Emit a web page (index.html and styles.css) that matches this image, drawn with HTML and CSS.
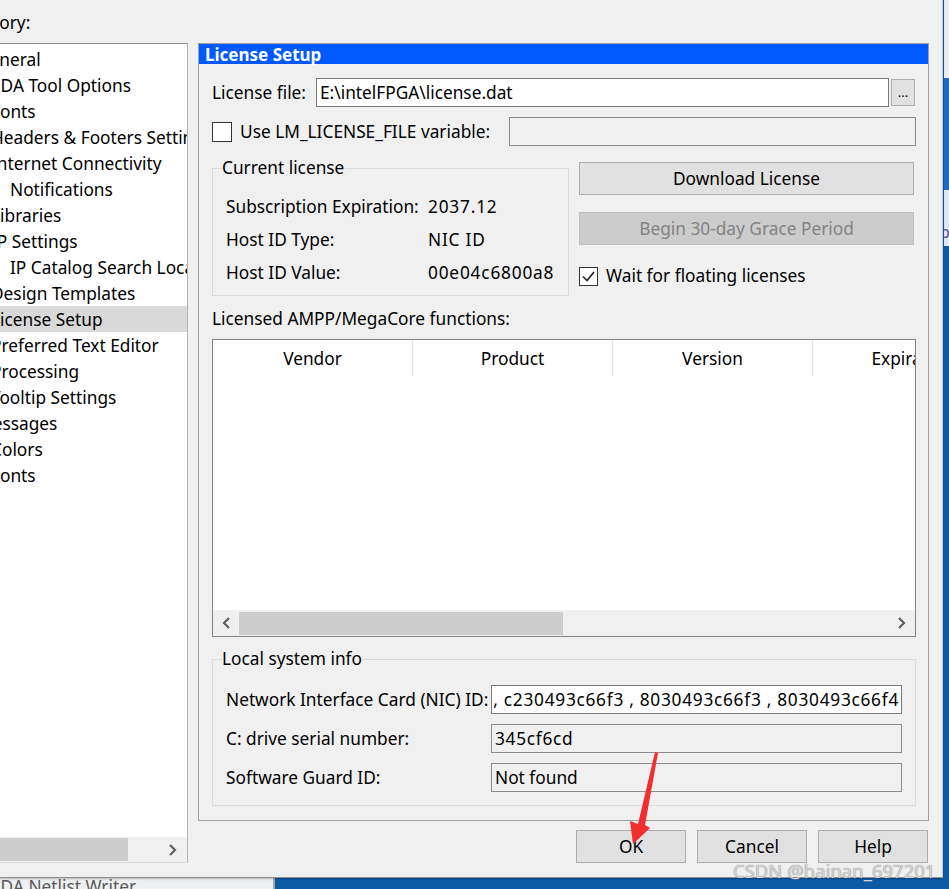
FILE: index.html
```html
<!DOCTYPE html>
<html>
<head>
<meta charset="utf-8">
<title>Options - License Setup</title>
<link rel="stylesheet" href="styles.css">
</head>
<body>
<div class="desktop">
  <div class="bg-strip strip-a"></div>
  <div class="bg-strip strip-b"></div>
  <div class="bg-strip strip-c"><span>p</span></div>
  <div class="bg-window"><span class="bg-window-text">EDA Netlist Writer</span></div>

  <div class="dialog">
    <div class="cat-label">Category:</div>
    <div class="dlg-body">
      <div class="tree">
        <ul class="tree-list">
          <li class="l0">General</li>
          <li class="l1">EDA Tool Options</li>
          <li class="l1">Fonts</li>
          <li class="l1">Headers &amp; Footers Settings</li>
          <li class="l1">Internet Connectivity</li>
          <li class="l2">Notifications</li>
          <li class="l1">Libraries</li>
          <li class="l1">IP Settings</li>
          <li class="l2">IP Catalog Search Locations</li>
          <li class="l1">Design Templates</li>
          <li class="l1 sel">License Setup</li>
          <li class="l1">Preferred Text Editor</li>
          <li class="l1">Processing</li>
          <li class="l1">Tooltip Settings</li>
          <li class="l0">Messages</li>
          <li class="l1">Colors</li>
          <li class="l1">Fonts</li>
        </ul>
        <div class="hscroll tree-scroll">
          <div class="thumb tree-thumb"></div>
          <div class="scroll-arrow right-arrow">
            <svg width="10" height="12" viewBox="0 0 10 12"><polyline points="2,1 7,6 2,11" fill="none" stroke="#606060" stroke-width="2.2"/></svg>
          </div>
        </div>
      </div>

      <div class="right-col">
        <section class="panel">
          <h1 class="panel-title">License Setup</h1>
          <div class="panel-body">
            <div class="row file-row">
              <span class="lbl file-lbl">License file:</span>
              <div class="field white">E:\intelFPGA\license.dat</div>
              <div class="btn dots">...</div>
            </div>

            <div class="row lm-row">
              <span class="checkbox"></span>
              <span class="lbl lm-lbl">Use LM_LICENSE_FILE variable:</span>
              <div class="field disabled lm-field"></div>
            </div>

            <div class="cur-row">
              <fieldset class="group cur-group">
                <legend>Current license</legend>
                <div class="kv"><span class="k">Subscription Expiration:</span><span class="v">2037.12</span></div>
                <div class="kv"><span class="k">Host ID Type:</span><span class="v">NIC ID</span></div>
                <div class="kv"><span class="k">Host ID Value:</span><span class="v">00e04c6800a8</span></div>
              </fieldset>
              <div class="side">
                <div class="btn wide">Download License</div>
                <div class="btn wide disabled-btn">Begin 30-day Grace Period</div>
                <div class="check-row">
                  <span class="checkbox checked">
                    <svg width="17" height="17" viewBox="0 0 17 17"><polyline points="3,8.5 7,12.5 14,4" fill="none" stroke="#222" stroke-width="1.6"/></svg>
                  </span>
                  <span class="lbl">Wait for floating licenses</span>
                </div>
              </div>
            </div>

            <div class="lbl ampp-lbl">Licensed AMPP/MegaCore functions:</div>

            <div class="table">
              <div class="thead">
                <div class="th">Vendor</div>
                <div class="th">Product</div>
                <div class="th">Version</div>
                <div class="th">Expiration</div>
              </div>
              <div class="tbody"></div>
              <div class="hscroll table-scroll">
                <div class="scroll-arrow left-arrow">
                  <svg width="10" height="12" viewBox="0 0 10 12"><polyline points="8,1 3,6 8,11" fill="none" stroke="#606060" stroke-width="2.2"/></svg>
                </div>
                <div class="thumb table-thumb"></div>
                <div class="scroll-spacer"></div>
                <div class="scroll-arrow right-arrow">
                  <svg width="10" height="12" viewBox="0 0 10 12"><polyline points="2,1 7,6 2,11" fill="none" stroke="#606060" stroke-width="2.2"/></svg>
                </div>
              </div>
            </div>

            <fieldset class="group sys-group">
              <legend>Local system info</legend>
              <div class="sys-row">
                <span class="k2">Network Interface Card (NIC) ID:</span>
                <div class="field white nic"><span>, c230493c66f3 , 8030493c66f3 , 8030493c66f4</span></div>
              </div>
              <div class="sys-row">
                <span class="k2">C: drive serial number:</span>
                <div class="field disabled num">345cf6cd</div>
              </div>
              <div class="sys-row">
                <span class="k2">Software Guard ID:</span>
                <div class="field disabled">Not found</div>
              </div>
            </fieldset>
          </div>
        </section>
        <div class="buttons">
          <div class="btn dlg-btn">OK</div>
          <div class="btn dlg-btn">Cancel</div>
          <div class="btn dlg-btn">Help</div>
        </div>
      </div>
    </div>
  </div>

  <svg class="red-arrow" width="60" height="110" viewBox="0 0 60 110">
    <polygon points="36,7 38,8 25,80 30,83 13,99 10,76 18,79 35,7" fill="#f22f2f"/>
  </svg>
  <div class="watermark">CSDN @hainan_697201</div>
</div>
</body>
</html>
```

FILE: styles.css
```css
html, body {
  margin: 0;
  padding: 0;
}
body {
  width: 949px;
  height: 889px;
  overflow: hidden;
  font-family: "Noto Sans", "Open Sans", sans-serif;
  font-size: 17.3px;
  color: #000;
}
.desktop {
  position: relative;
  width: 949px;
  height: 889px;
  background: #0c5aa6;
  overflow: hidden;
}

/* background windows */
.bg-strip {
  position: absolute;
  left: 944px;
  width: 5px;
}
.strip-a { top: 0; height: 78px; background: #e8eef3; }
.strip-b { top: 78px; height: 112px; background: #1d6cbd; }
.strip-c { top: 190px; height: 56px; background: #dce9f5; overflow: hidden; }
.strip-c span { display: block; color: #6a3aa0; font-size: 16px; line-height: 20px; margin-top: 32px; margin-left: -4px; }
.bg-window {
  position: absolute;
  left: 0;
  top: 878px;
  width: 273px;
  height: 11px;
  background: #eef0f2;
  border-right: 2px solid #a8a8a8;
  overflow: hidden;
}
.bg-window-text {
  display: block;
  margin-left: -9px;
  line-height: 14px;
  margin-top: 2px;
  color: #5a5a5a;
  white-space: nowrap;
}

/* dialog */
.dialog {
  position: absolute;
  left: 0;
  top: 0;
  width: 943px;
  height: 878px;
  box-sizing: border-box;
  background: #f0f0f0;
  border-right: 1px solid #c9c9c9;
  border-bottom: 1px solid #8e8e8e;
  box-shadow: 0 1px 2px rgba(0, 0, 0, 0.25);
}
.cat-label {
  height: 43px;
  box-sizing: border-box;
  padding-top: 12px;
  line-height: 22px;
  margin-left: -48px;
  white-space: nowrap;
}
.dlg-body {
  display: grid;
  grid-template-columns: 188px 731px;
  column-gap: 10px;
}

/* tree */
.tree {
  height: 820px;
  box-sizing: border-box;
  background: #fff;
  border-top: 1px solid #8a8a8a;
  border-right: 1px solid #b4b4b4;
  border-bottom: 1px solid #dcdcdc;
  display: flex;
  flex-direction: column;
  overflow: hidden;
}
.tree-list {
  list-style: none;
  margin: 0;
  padding: 2px 0 0 0;
  flex: 1;
}
.tree-list li {
  height: 26px;
  box-sizing: border-box;
  padding-top: 1px;
  line-height: 25px;
  white-space: nowrap;
}
.tree-list .l0 { text-indent: -23px; }
.tree-list .l1 { text-indent: -9px; }
.tree-list .l2 { text-indent: 10px; }
.tree-list .sel { background: #d9d9d9; }

.hscroll {
  display: flex;
  align-items: center;
  background: #f0f0f0;
}
.tree-scroll {
  height: 25px;
}
.thumb {
  background: #cdcdcd;
  height: 23px;
}
.tree-thumb {
  width: 128px;
}
.tree-scroll .right-arrow {
  margin-left: auto;
  width: 26px;
  margin-right: 1px;
}
.scroll-arrow {
  width: 26px;
  display: flex;
  align-items: center;
  justify-content: center;
}

/* right column */
.right-col {
  display: flex;
  flex-direction: column;
}
.panel {
  height: 778px;
  box-sizing: border-box;
  border: 1px solid #a0a0a0;
  display: flex;
  flex-direction: column;
}
.panel-title {
  margin: 0;
  height: 20px;
  box-sizing: border-box;
  padding-top: 1px;
  line-height: 19px;
  background: #0058ff;
  color: #fff;
  font-size: 17px;
  font-weight: bold;
  padding-left: 6px;
  white-space: nowrap;
}
.panel-body {
  padding: 14px 13px 0 13px;
  display: flex;
  flex-direction: column;
}
.row {
  display: flex;
  align-items: center;
}
.lbl {
  white-space: nowrap;
  line-height: 22px;
}
.file-row {
  height: 29px;
}
.file-lbl {
  width: 104px;
  flex: none;
}
.field {
  height: 29px;
  box-sizing: border-box;
  border: 1px solid #7a7a7a;
  padding-left: 3px;
  line-height: 27px;
  white-space: nowrap;
  overflow: hidden;
}
.field.white { background: #fff; }
.field.disabled { background: #f0f0f0; border-color: #8c8c8c; }
.file-row .field { flex: 1; }
.btn {
  box-sizing: border-box;
  background: #e1e1e1;
  border: 1px solid #adadad;
  text-align: center;
  white-space: nowrap;
}
.dots {
  width: 24px;
  height: 27px;
  margin-left: 2px;
  line-height: 24px;
  font-size: 13px;
}
.lm-row {
  margin-top: 10px;
  height: 29px;
}
.checkbox {
  display: inline-flex;
  align-items: center;
  justify-content: center;
  width: 20px;
  height: 20px;
  box-sizing: border-box;
  border: 1px solid #333;
  background: #fff;
  flex: none;
}
.lm-row .checkbox { margin-right: 8px; }
.lm-lbl { width: 269px; flex: none; }
.lm-field { flex: 1; margin-right: -1px; }

.cur-row {
  margin-top: 11px;
  display: flex;
  gap: 10px;
}
.group {
  margin: 0;
  border: 1px solid #dcdcdc;
  padding: 0 13px 0 9px;
  min-width: 0;
}
.group legend {
  padding: 0 1px 0 0;
  line-height: 22px;
  white-space: nowrap;
}
.cur-group {
  width: 357px;
  box-sizing: border-box;
  padding-top: 11px;
  padding-bottom: 6px;
  flex: none;
}
.kv {
  display: flex;
  height: 33px;
  line-height: 33px;
  padding-left: 4px;
  white-space: nowrap;
}
.k { width: 202px; flex: none; }
.v { letter-spacing: 0.8px; }
.side {
  width: 335px;
  padding-top: 5px;
  display: flex;
  flex-direction: column;
}
.wide {
  height: 33px;
  line-height: 31px;
}
.disabled-btn {
  margin-top: 17px;
  background: #cccccc;
  border-color: #bfbfbf;
  color: #838383;
}
.check-row {
  margin-top: 21px;
  display: flex;
  align-items: center;
  height: 20px;
}
.checkbox.checked {
  width: 19px;
  height: 19px;
  margin-right: 8px;
}
.ampp-lbl {
  margin-top: 12px;
}
.table {
  margin-top: 9px;
  margin-right: -1px;
  height: 298px;
  box-sizing: border-box;
  border: 1px solid #828282;
  background: #fff;
  display: flex;
  flex-direction: column;
  overflow: hidden;
}
.thead {
  display: flex;
  height: 36px;
  flex: none;
}
.th {
  width: 200px;
  flex: none;
  box-sizing: border-box;
  border-right: 1px solid #e5e5e5;
  text-align: center;
  line-height: 38px;
  white-space: nowrap;
}
.tbody { flex: 1; }
.table-scroll {
  height: 26px;
  flex: none;
}
.table-thumb {
  width: 324px;
}
.scroll-spacer { flex: 1; }
.table-scroll .right-arrow { margin-right: 0; }

.sys-group {
  margin-top: 11px;
  margin-right: -1px;
  padding-top: 15px;
  padding-bottom: 13px;
}
.sys-row {
  display: flex;
  align-items: center;
  padding-left: 4px;
  height: 29px;
}
.sys-row + .sys-row { margin-top: 10px; }
.k2 { width: 265px; flex: none; white-space: nowrap; }
.sys-row .field { flex: 1; }
.field.num { letter-spacing: 0.7px; }
.nic {
  display: flex;
  justify-content: flex-end;
  padding-right: 2px;
}
.nic span { flex: none; letter-spacing: 0.72px; }

.buttons {
  margin-top: 9px;
  display: flex;
  justify-content: flex-end;
  gap: 11px;
  padding-right: 1px;
}
.dlg-btn {
  width: 110px;
  height: 33px;
  line-height: 32px;
}

/* annotations */
.red-arrow {
  position: absolute;
  left: 620px;
  top: 745px;
}
.watermark {
  position: absolute;
  left: 733px;
  top: 858px;
  font-size: 18.5px;
  line-height: 26px;
  color: #d4d4d4;
  text-shadow: 0 0 1px #6e6e6e;
  white-space: nowrap;
}
```
